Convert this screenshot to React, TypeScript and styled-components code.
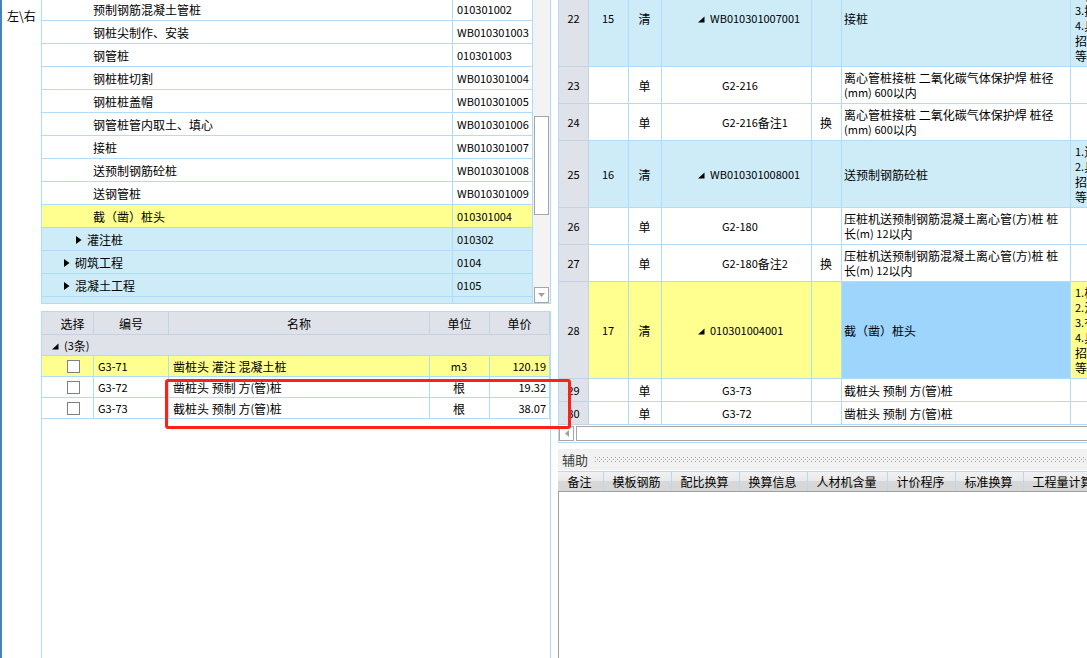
import React from 'react';
import styled, { createGlobalStyle } from 'styled-components';

const line = '#afdcfa';
const headLine = '#c3d3e4';
const headBg = '#dfe2e8';
const blue = '#ceecf8';
const yellow = '#ffff90';
const picked = '#9ed5fd';

const Global = createGlobalStyle`
  * { box-sizing: border-box; }
  body { margin: 0; background: #fff; }
  body, button, input, table {
    font-family: "Noto Sans CJK SC", sans-serif;
    font-size: 12px;
    line-height: 15px;
    color: #000;
  }
`;

const Page = styled.div`
  display: flex;
  height: 100vh;
  overflow: hidden;
  border-left: 2px solid #4682b8;
`;

const Strip = styled.nav`
  flex: 0 0 39px;
  padding-top: 8px;
`;

const StripButton = styled.button`
  display: block;
  width: 100%;
  padding: 0 0 0 5px;
  border: 0;
  background: none;
  text-align: left;
  white-space: nowrap;
`;

const LeftPane = styled.div`
  flex: 0 0 510px;
  display: flex;
  flex-direction: column;
  gap: 7px;
  margin-right: 7px;
`;

const TreePanel = styled.section`
  display: flex;
  height: 304px;
  overflow: hidden;
  border: 1px solid ${line};
  border-top: 0;
`;

const Grid = styled.table`
  flex: 1;
  width: 100%;
  table-layout: fixed;
  border-collapse: separate;
  border-spacing: 0;
`;

const TreeArea = styled.div`
  flex: 1;
  overflow: hidden;
  margin-top: -2px;
`;

const Row = styled.tr<{ $h: number; $bg?: string }>`
  height: ${p => p.$h}px;
  background: ${p => p.$bg || '#fff'};
`;

const Cell = styled.td<{ $align?: string; $pad?: number; $bg?: string }>`
  padding: 0 3px 0 ${p => p.$pad ?? 2}px;
  border-right: 1px solid ${line};
  border-bottom: 1px solid ${line};
  background: ${p => p.$bg || 'transparent'};
  text-align: ${p => p.$align || 'left'};
  overflow: hidden;
  white-space: nowrap;
`;

const WrapCell = styled(Cell)`
  white-space: normal;
`;

const NotesCell = styled(Cell)`
  white-space: pre;
  border-right: 0;
`;

const HeadCell = styled.th<{ $pad?: number }>`
  padding: 0 0 0 ${p => p.$pad || 0}px;
  border-right: 1px solid ${headLine};
  border-bottom: 1px solid ${headLine};
  background: ${headBg};
  font-weight: 400;
`;

const RowNumber = styled.th`
  padding: 0;
  border-right: 1px solid ${headLine};
  border-bottom: 1px solid ${headLine};
  background: ${headBg};
  font-weight: 400;
`;

const GroupCell = styled.td`
  padding: 0 0 0 10px;
  background: ${headBg};
  border-bottom: 1px solid ${line};
`;

const Latin = styled.span`
  font-size: 11px;
  line-height: 0;
  vertical-align: 1px;
`;

const Arrow = styled.svg`
  margin-right: 5px;
`;

const ClosedArrow = styled(Arrow)`
  vertical-align: 1px;
`;

const VScroll = styled.div`
  flex: 0 0 17px;
  display: flex;
  flex-direction: column;
  justify-content: space-between;
  padding: 116px 1px 0;
  background: #f3f3f3;
`;

const Thumb = styled.div`
  height: 99px;
  border: 1px solid #a6a6a6;
  background: #fff;
`;

const ScrollButton = styled.button`
  display: flex;
  align-items: center;
  justify-content: center;
  flex: none;
  width: 15px;
  height: 16px;
  padding: 0;
  border: 1px solid #a6a6a6;
  background: #fff;
`;

const PricePanel = styled.section`
  position: relative;
  flex: 1;
  border: 1px solid ${line};
  border-bottom: 0;
`;

const Tick = styled.input`
  appearance: none;
  display: block;
  width: 13px;
  height: 13px;
  margin: 0 auto;
  border: 1px solid #808080;
  background: #fff;
`;

const Highlight = styled.div`
  position: absolute;
  left: 123px;
  top: 67px;
  width: 406px;
  height: 50px;
  border: 3px solid #fb2318;
  border-radius: 3px;
  z-index: 2;
  pointer-events: none;
`;

const RightPane = styled.div`
  flex: 1;
  min-width: 0;
  display: flex;
  flex-direction: column;
`;

const BillPanel = styled.section`
  flex: none;
  overflow: hidden;
  border-left: 1px solid ${line};
  border-bottom: 1px solid ${line};
`;

const BillScroll = styled.div`
  margin-top: -30px;
`;

const HScroll = styled.div`
  display: flex;
  gap: 2px;
  height: 17px;
  padding: 1px 0;
`;

const HThumb = styled.div`
  flex: 1;
  border: 1px solid #a6a6a6;
  border-right: 0;
  background: #fff;
`;

const HButton = styled(ScrollButton)`
  height: 15px;
`;

const AuxBar = styled.header`
  flex: none;
  display: flex;
  align-items: center;
  gap: 7px;
  height: 21px;
  margin: 6px 0 1px;
  padding-left: 4px;
  background: #f1f1f1;
  color: #404040;
  font-size: 13px;
`;

const Grip = styled.svg`
  flex: 1;
  height: 5px;
`;

const Tabs = styled.div`
  flex: none;
  display: flex;
  overflow: hidden;
  height: 21px;
  border-top: 1px solid ${line};
  border-bottom: 1px solid #a0a0a0;
`;

const Tab = styled.button<{ $w: number }>`
  flex: 0 0 ${p => p.$w}px;
  padding: 0 2px 0 0;
  border: 0;
  border-right: 1px solid ${line};
  background: linear-gradient(#f1f1f1 0, #e9e9e9 45%, #d8d8d8 50%, #d6d6d6 100%);
  white-space: nowrap;
`;

const TabBody = styled.div`
  flex: 1;
  border-left: 1px solid #a0a0a0;
`;

/* Latin letters and digits are set one size below the Chinese characters. */
const Text = ({ children }: { children: string }) => (
  <>
    {children.split(/([\x21-\x7e]+)/).map((part, i) => (i % 2 ? <Latin key={i}>{part}</Latin> : part))}
  </>
);

const Closed = () => (
  <ClosedArrow width="6" height="8" viewBox="0 0 6 8"><path d="M0 0L5.5 4L0 8Z" /></ClosedArrow>
);
const Open = () => (
  <ClosedArrow width="7" height="7" viewBox="0 0 7 7"><path d="M6.5 0.5V6.5H0Z" /></ClosedArrow>
);

type TreeRow = { name: string; code: string; pad: number; bg?: string; closed?: boolean };
const leaf = (name: string, code: string, bg?: string): TreeRow => ({ name, code, pad: 51, bg });
const tree: TreeRow[] = [
  leaf('预制钢筋混凝土管桩', '010301002'),
  leaf('钢桩尖制作、安装', 'WB010301003'),
  leaf('钢管桩', '010301003'),
  leaf('钢桩桩切割', 'WB010301004'),
  leaf('钢桩桩盖帽', 'WB010301005'),
  leaf('钢管桩管内取土、填心', 'WB010301006'),
  leaf('接桩', 'WB010301007'),
  leaf('送预制钢筋砼桩', 'WB010301008'),
  leaf('送钢管桩', 'WB010301009'),
  leaf('截（凿）桩头', '010301004', yellow),
  { name: '灌注桩', code: '010302', pad: 34, bg: blue, closed: true },
  { name: '砌筑工程', code: '0104', pad: 22, bg: blue, closed: true },
  { name: '混凝土工程', code: '0105', pad: 22, bg: blue, closed: true },
  { name: '', code: '', pad: 22, bg: blue },
];

const prices = [
  ['G3-71', '凿桩头 灌注 混凝土桩', 'm3', '120.19'],
  ['G3-72', '凿桩头 预制 方(管)桩', '根', '19.32'],
  ['G3-73', '截桩头 预制 方(管)桩', '根', '38.07'],
];

type Bill = { no: string; h: number; seq?: string; code: string; swap?: string; name: string; notes?: string; bg?: string; pick?: boolean };
const bills: Bill[] = [
  { no: '22', h: 97, seq: '15', code: 'WB010301007001', name: '接桩', notes: '1.桩\n2.桩\n3.接\n4.具\n招\n等', bg: blue },
  { no: '23', h: 37, code: 'G2-216', name: '离心管桩接桩 二氧化碳气体保护焊 桩径(mm) 600以内' },
  { no: '24', h: 37, code: 'G2-216备注1', swap: '换', name: '离心管桩接桩 二氧化碳气体保护焊 桩径(mm) 600以内' },
  { no: '25', h: 67, seq: '16', code: 'WB010301008001', name: '送预制钢筋砼桩', notes: '1.送\n2.具\n招\n等', bg: blue },
  { no: '26', h: 37, code: 'G2-180', name: '压桩机送预制钢筋混凝土离心管(方)桩 桩长(m) 12以内' },
  { no: '27', h: 37, code: 'G2-180备注2', swap: '换', name: '压桩机送预制钢筋混凝土离心管(方)桩 桩长(m) 12以内' },
  { no: '28', h: 97, seq: '17', code: '010301004001', name: '截（凿）桩头', notes: '1.桩\n2.混\n3.有\n4.具\n招\n等', bg: yellow, pick: true },
  { no: '29', h: 23, code: 'G3-73', name: '截桩头 预制 方(管)桩' },
  { no: '30', h: 23, code: 'G3-72', name: '凿桩头 预制 方(管)桩' },
];

const tabs: [string, number][] = [
  ['备注', 46], ['模板钢筋', 68], ['配比换算', 68], ['换算信息', 68],
  ['人材机含量', 80], ['计价程序', 68], ['标准换算', 68], ['工程量计算', 80],
];

const Cols = ({ widths }: { widths: (number | undefined)[] }) => (
  <colgroup>{widths.map((w, i) => <col key={i} width={w} />)}</colgroup>
);

export default function App() {
  return (
    <Page>
      <Global />
      <Strip><StripButton>左\右</StripButton></Strip>
      <LeftPane>
        <TreePanel>
          <TreeArea>
            <Grid>
              <Cols widths={[undefined, 80]} />
              <tbody>
                {tree.map((r, i) => (
                  <Row key={i} $h={23} $bg={r.bg}>
                    <Cell $pad={r.pad}>{r.closed && <Closed />}{r.name}</Cell>
                    <Cell $pad={4}><Text>{r.code}</Text></Cell>
                  </Row>
                ))}
              </tbody>
            </Grid>
          </TreeArea>
          <VScroll>
            <Thumb />
            <ScrollButton aria-label="向下滚动">
              <svg width="7" height="4" viewBox="0 0 7 4"><path d="M0 0H7L3.5 4Z" fill="#a0a0a0" /></svg>
            </ScrollButton>
          </VScroll>
        </TreePanel>
        <PricePanel>
          <Grid>
            <Cols widths={[52, 75, undefined, 60, 60]} />
            <thead>
              <Row $h={23}>
                <HeadCell scope="col" $pad={10}>选择</HeadCell>
                <HeadCell scope="col">编号</HeadCell>
                <HeadCell scope="col">名称</HeadCell>
                <HeadCell scope="col">单位</HeadCell>
                <HeadCell scope="col">单价</HeadCell>
              </Row>
            </thead>
            <tbody>
              <Row $h={21}><GroupCell colSpan={5}><Open /><Text>(3条)</Text></GroupCell></Row>
              {prices.map(([code, name, unit, price], i) => (
                <Row key={code} $h={21} $bg={i === 0 ? yellow : undefined}>
                  <Cell $pad={15}><Tick type="checkbox" aria-label={code} /></Cell>
                  <Cell $pad={4}><Text>{code}</Text></Cell>
                  <Cell $pad={4}><Text>{name}</Text></Cell>
                  <Cell $align="center"><Text>{unit}</Text></Cell>
                  <Cell $align="right"><Text>{price}</Text></Cell>
                </Row>
              ))}
            </tbody>
          </Grid>
          <Highlight />
        </PricePanel>
      </LeftPane>
      <RightPane>
        <BillPanel>
          <BillScroll>
            <Grid>
              <Cols widths={[30, 40, 33, 150, 30, 229, undefined]} />
              <tbody>
                {bills.map(b => (
                  <Row key={b.no} $h={b.h} $bg={b.bg}>
                    <RowNumber scope="row"><Text>{b.no}</Text></RowNumber>
                    <Cell $align="center"><Text>{b.seq || ''}</Text></Cell>
                    <Cell $align="center">{b.seq ? '清' : '单'}</Cell>
                    <Cell $pad={b.seq ? 36 : 60}>{b.seq && <Open />}<Text>{b.code}</Text></Cell>
                    <Cell $align="center">{b.swap}</Cell>
                    <WrapCell $bg={b.pick ? picked : undefined}><Text>{b.name}</Text></WrapCell>
                    <NotesCell $pad={4}><Text>{b.notes || ''}</Text></NotesCell>
                  </Row>
                ))}
              </tbody>
            </Grid>
          </BillScroll>
          <HScroll>
            <HButton aria-label="向左滚动">
              <svg width="4" height="7" viewBox="0 0 4 7"><path d="M4 0V7L0 3.5Z" fill="#a0a0a0" /></svg>
            </HButton>
            <HThumb />
          </HScroll>
        </BillPanel>
        <AuxBar>
          辅助
          <Grip>
            <defs>
              <pattern id="dots" width="4" height="4" patternUnits="userSpaceOnUse">
                <path d="M0 0h1v1h-1zM2 2h1v1h-1z" fill="#a0a0a0" />
              </pattern>
            </defs>
            <rect width="100%" height="5" fill="url(#dots)" />
          </Grip>
        </AuxBar>
        <Tabs role="tablist">
          {tabs.map(([t, w]) => <Tab key={t} $w={w} role="tab">{t}</Tab>)}
        </Tabs>
        <TabBody />
      </RightPane>
    </Page>
  );
}
